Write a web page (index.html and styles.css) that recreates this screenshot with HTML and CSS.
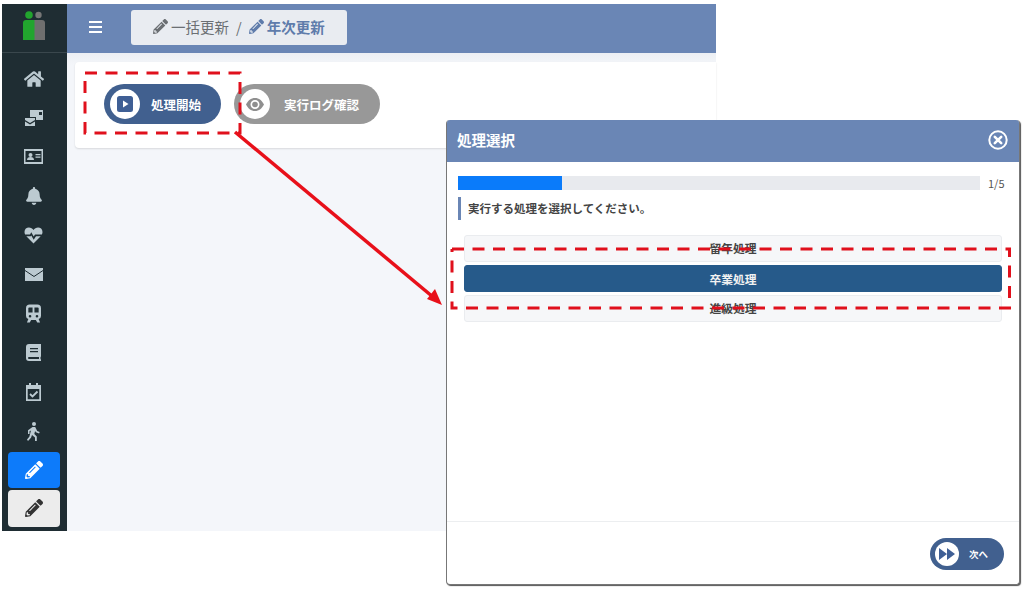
FILE: index.html
```html
<!DOCTYPE html>
<html lang="ja">
<head>
<meta charset="utf-8">
<title>年次更新</title>
<link rel="stylesheet" href="styles.css">
</head>
<body>
<svg class="defs" width="0" height="0"><symbol id="pen" viewBox="0 0 512 512"><path d="M497.9 142.1l-46.1 46.1c-4.7 4.7-12.3 4.7-17 0l-111-111c-4.7-4.7-4.7-12.3 0-17l46.1-46.1c18.7-18.7 49.1-18.7 67.900 0l60.1 60.1c18.8 18.7 18.8 49.1 0 67.900zM284.2 99.8L21.6 362.4.4 483.900c-2.900 16.4 11.400 30.6 27.800 27.800l121.500-21.300 262.600-262.600c4.700-4.700 4.700-12.300 0-17l-111-111c-4.800-4.700-12.400-4.700-17.100 0zM124.100 339.900c-5.500-5.500-5.500-14.300 0-19.800l154-154c5.500-5.500 14.300-5.500 19.800 0s5.500 14.300 0 19.800l-154 154c-5.500 5.500-14.300 5.500-19.800 0zM88 424h48v36.300l-64.500 11.300-31.100-31.100L51.700 376H88v48z"/></symbol></svg>
<div class="canvas">
  <div class="app">
    <nav class="sidebar">
      <div class="logo">
        <svg width="24" height="30" viewBox="0 0 24 30"><circle cx="7" cy="4" r="3.800" fill="#22a52e"/><circle cx="16.500" cy="4" r="3.200" fill="#777"/><path d="M12 9h8q3 0 3 3v17H12z" fill="#6f6f6f"/><path d="M1 12q0-3 3-3h8.500v20H1z" fill="#22a52e"/></svg>
      </div>
      <div class="side-icons">
        <span class="side-icon"><svg width="20" height="18" viewBox="0 0 576 512"><path d="M280.37 148.26L96 300.11V464a16 16 0 0 0 16 16l112.06-.29a16 16 0 0 0 15.92-16V368a16 16 0 0 1 16-16h64a16 16 0 0 1 16 16v95.64a16 16 0 0 0 16 16.05L464 480a16 16 0 0 0 16-16V300L295.67 148.26a12.19 12.19 0 0 0-15.3 0zM571.6 251.47L488 182.56V44.05a12 12 0 0 0-12-12h-56a12 12 0 0 0-12 12v72.61L318.47 43a48 48 0 0 0-61 0L4.34 251.47a12 12 0 0 0-1.6 16.9l25.5 31A12 12 0 0 0 45.15 301l235.22-193.74a12.19 12.19 0 0 1 15.3 0L530.9 301a12 12 0 0 0 16.9-1.6l25.5-31a12 12 0 0 0-1.7-16.93z" class="ic"/></svg></span>
        <span class="side-icon"><svg width="20" height="18" viewBox="0 0 20 18"><path d="M6 1h13v10h-7V8H6z" class="ic"/><rect x="15" y="3" width="3" height="3" fill="#1f2d33"/><path d="M1 9h10v2L6 14 1 11zM1 12.500l5 3 5-3V17H1z" class="ic"/></svg></span>
        <span class="side-icon"><svg width="19" height="15" viewBox="0 0 19 15"><path fill-rule="evenodd" d="M0 0h19v15H0zM1.500 2v11h16V2z" class="ic"/><circle cx="6.500" cy="6" r="2" class="ic"/><path d="M3 11q0-3 3.500-3t3.500 3zM11.500 5h5v1.300h-5zM11.500 7.500h5v1.300h-5z" class="ic"/></svg></span>
        <span class="side-icon"><svg width="16" height="18" viewBox="0 0 448 512"><path d="M224 512c35.32 0 63.97-28.65 63.97-64H160.03c0 35.35 28.65 64 63.97 64zm215.39-149.71c-19.32-20.76-55.47-51.99-55.47-154.29 0-77.7-54.48-139.9-127.94-155.16V32c0-17.67-14.32-32-31.98-32s-31.98 14.33-31.98 32v20.84C118.56 68.1 64.08 130.3 64.08 208c0 102.3-36.15 133.53-55.47 154.29-6 6.45-8.66 14.16-8.61 21.71.11 16.4 12.98 32 32.1 32h383.8c19.12 0 32-15.6 32.1-32 .05-7.55-2.61-15.27-8.61-21.71z" class="ic"/></svg></span>
        <span class="side-icon"><svg width="19" height="17" viewBox="0 0 19 17"><path d="M9.500 3C7.500-.500 .5-.500.500 5c0 1 .2 1.700.6 2.500H6l1.300-2.300 2.400 4.300L11 7.500h6.900c.4-.8.600-1.500.6-2.500 0-5.500-7-5.500-9-2zM2.300 9.200 9.500 16.500l7.200-7.300H12l-2.300 3.500L7.300 8.400 6.800 9.200z" class="ic"/></svg></span>
        <span class="side-icon"><svg width="18" height="13" viewBox="0 0 18 13"><rect width="18" height="13" class="ic"/><path d="M0 2.500 9 8.500 18 2.500" fill="none" stroke="#1f2d33" stroke-width="1"/></svg></span>
        <span class="side-icon"><svg width="15" height="19" viewBox="0 0 16 19"><path fill-rule="evenodd" d="M4 0h8a4 4 0 0 1 4 4v8a3.500 3.500 0 0 1-2.500 3.400L15 19h-3l-1.500-2.500h-5L4 19H1l1.500-3.600A3.500 3.500 0 0 1 0 12V4a4 4 0 0 1 4-4zM2.500 4v4.500h4.500V3H3.500a1 1 0 0 0-1 1zM9 3v5.500h4.500V4a1 1 0 0 0-1-1zM4.300 11a1.400 1.400 0 1 0 0 2.800 1.400 1.400 0 0 0 0-2.800zM11.700 11a1.400 1.400 0 1 0 0 2.800 1.400 1.400 0 0 0 0-2.800z" class="ic"/></svg></span>
        <span class="side-icon"><svg width="15" height="17" viewBox="0 0 15 17"><path fill-rule="evenodd" d="M3 0h12v12.500l-.5.500v2l.5.500V17H3a3 3 0 0 1-3-3V3a3 3 0 0 1 3-3zM4 4v1.300h8V4zM4 7v1.300h8V7zM2 14a1 1 0 0 0 1 1h10v-2H3a1 1 0 0 0-1 1z" class="ic"/></svg></span>
        <span class="side-icon"><svg width="15" height="18" viewBox="0 0 15 18"><path fill-rule="evenodd" d="M3 0h2v2h5V0h2v2h3v16H0V2h3zM1.700 6v10.300h11.600V6z" class="ic"/><path d="M4 11l2.500 2.500L11.500 8.500" fill="none" stroke="#bccad1" stroke-width="1.800"/></svg></span>
        <span class="side-icon"><svg width="13" height="19" viewBox="0 0 13 19"><circle cx="7" cy="2" r="2" class="ic"/><path d="M5.500 5h2.700l2 4 2.500 1-.6 1.500-3.200-1.300-.8-1.200-.8 3 2.500 2.500V19H8v-3.500L5 13l-1 2.800L1 19 0 17.500l2.300-2.800L4 8.500l-1.500.7V12H1V8.300z" class="ic"/></svg></span>
        <span class="side-icon side-active"><svg class="pen-white" width="18" height="18"><use href="#pen"/></svg></span>
        <span class="side-icon side-light"><svg class="pen-dark" width="18" height="18"><use href="#pen"/></svg></span>
      </div>
    </nav>
    <div class="content">
      <header class="topbar">
        <span class="menu-icon"><i></i><i></i><i></i></span>
        <div class="crumb">
          <svg class="pencil pen-grey" width="15" height="15"><use href="#pen"/></svg>
          <span class="crumb-text">一括更新</span>
          <span class="crumb-sep">/</span>
          <svg class="pencil pen-blue" width="15" height="15"><use href="#pen"/></svg>
          <span class="crumb-current">年次更新</span>
        </div>
      </header>
      <main class="main">
        <section class="card">
          <button class="pill pill-blue">
            <span class="pill-disc"><svg width="16" height="16" viewBox="0 0 16 16"><path fill-rule="evenodd" d="M2.500 0h11A2.500 2.500 0 0 1 16 2.500v11a2.500 2.500 0 0 1-2.500 2.500h-11A2.500 2.500 0 0 1 0 13.500v-11A2.500 2.500 0 0 1 2.500 0zM6 4.500v7L11.500 8z" fill="#3f5f95"/></svg></span>
            <span class="pill-label">処理開始</span>
          </button>
          <button class="pill pill-grey">
            <span class="pill-disc"><svg width="18" height="13" viewBox="0 0 18 13"><path fill-rule="evenodd" d="M9 0c4 0 7.200 2.700 9 6.500C16.200 10.300 13 13 9 13S1.800 10.300 0 6.500C1.800 2.700 5 0 9 0zM9 2a4.500 4.500 0 1 0 0 9 4.500 4.500 0 0 0 0-9z" fill="#8f8f8f"/><circle cx="9" cy="6.500" r="2.800" fill="#8f8f8f"/></svg></span>
            <span class="pill-label">実行ログ確認</span>
          </button>
        </section>
      </main>
    </div>
  </div>

  <section class="modal">
    <header class="modal-head">
      <h2 class="modal-title">処理選択</h2>
      <svg width="20" height="20" viewBox="0 0 20 20"><circle cx="10" cy="10" r="8.700" fill="none" stroke="#fff" stroke-width="2"/><path d="M6.800 6.800l6.400 6.400M13.200 6.800l-6.400 6.400" stroke="#fff" stroke-width="2.600" stroke-linecap="round"/></svg>
    </header>
    <div class="modal-body">
      <div class="progress-row">
        <div class="progress"><div class="progress-fill"></div></div>
        <span class="progress-num">1/5</span>
      </div>
      <p class="prompt">実行する処理を選択してください。</p>
      <div class="options">
        <div class="option">留年処理</div>
        <div class="option option-on">卒業処理</div>
        <div class="option">進級処理</div>
      </div>
    </div>
    <footer class="modal-foot">
      <button class="pill pill-blue pill-small">
        <span class="pill-disc"><svg width="16" height="12" viewBox="0 0 16 12"><path d="M0 0l8 6-8 6zM8 0l8 6-8 6z" fill="#3f5f95"/></svg></span>
        <span class="pill-label">次へ</span>
      </button>
    </footer>
  </section>

  <svg class="arrow" width="1024" height="590" viewBox="0 0 1024 590">
    <path class="dash" d="M85 73H240V133H85V73"/>
    <path class="dash" d="M452 249H1009.500V308H452V249"/>
    <path d="M235 132 433 297" stroke="#e8101a" stroke-width="3.500" fill="none"/>
    <path d="M442 305 427 299 435 289z" fill="#e8101a"/>
  </svg>
</div>
</body>
</html>
```
FILE: styles.css
```css
* { box-sizing: border-box; }
html, body { margin: 0; padding: 0; background: #fff; }
body { font-family: "Noto Sans CJK JP", "Noto Sans", sans-serif; color: #444; }
.defs { position: absolute; }
.canvas { position: relative; width: 1024px; height: 590px; overflow: hidden; background: #fff; }

.app { position: absolute; left: 2px; top: 4px; width: 714px; height: 527px; display: flex; }

.sidebar { width: 65px; background: #1f2d33; display: flex; flex-direction: column; flex: none; }
.logo { height: 49px; display: flex; align-items: center; justify-content: center; padding: 0 1px 5px 0; border-bottom: 1px solid #3a474d; }
.ic { fill: #bccad1; }
.pen-white { fill: #fff; }
.pen-dark { fill: #333; }
.pen-grey { fill: #6b6f73; }
.pen-blue { fill: #5f7cab; }
.side-icons { display: flex; flex-direction: column; align-items: center; padding: 6px 2px 0 0; }
.side-icon { width: 52px; height: 39.2px; display: flex; align-items: center; justify-content: center; }
.side-active { height: 36px; margin-top: 1px; background: #0d7bfa; border-radius: 4px; }
.side-light { height: 37px; margin-top: 2px; background: #ececec; border-radius: 4px; }

.content { flex: 1; display: flex; flex-direction: column; min-width: 0; }
.topbar { height: 49px; background: #6a86b5; display: flex; align-items: center; padding: 0 0 3px 22px; }
.menu-icon { width: 13px; display: flex; flex-direction: column; gap: 3px; margin-right: 29px; }
.menu-icon i { display: block; height: 2px; background: #fff; }
.crumb { width: 216px; height: 35px; background: #e9ecf1; border-radius: 3px; display: flex; align-items: center; padding: 0 0 2px 22px; font-size: 14.500px; }
.pencil { flex: none; margin-right: 3px; }
.crumb-text { color: #6b6f73; }
.crumb-sep { color: #6b6f73; margin: 0 7px; }
.crumb-current { color: #5f7cab; font-weight: 700; }

.main { flex: 1; background: linear-gradient(#eceff4 0, #f4f6fa 12px); padding: 9px 0 0 8px; }
.card { height: 86px; background: #fff; border-radius: 4px 0 0 4px; box-shadow: 0 1px 2px rgba(0,0,0,.12); display: flex; align-items: center; gap: 13px; padding: 0 0 2px 29px; }

.pill { border: 0; border-radius: 21px; height: 40px; display: flex; align-items: center; padding: 0 0 0 6px; color: #fff; font: 700 12.500px "Noto Sans CJK JP", sans-serif; }
.pill-blue { background: #41608f; width: 117px; }
.pill-grey { background: #989898; width: 146px; }
.pill-grey .pill-label { margin-left: 14px; }
.pill-disc { width: 30px; height: 30px; border-radius: 50%; background: #fff; display: flex; align-items: center; justify-content: center; flex: none; }
.pill-label { margin-left: 11px; }

.modal { position: absolute; left: 446px; top: 120px; width: 574px; height: 465px; background: #fff; border-radius: 4px; border: 1px solid #777; border-top: 0; box-shadow: 1px 1px 1px #555; display: flex; flex-direction: column; }
.modal-head { height: 42px; background: #6a86b5; display: flex; align-items: center; justify-content: space-between; padding: 0 11px 3px 10px; border-radius: 3px 3px 0 0; flex: none; }
.modal-title { margin: 0; color: #fff; font-size: 14.500px; font-weight: 700; }
.modal-body { flex: 1; padding: 14px 15px 0 11px; }
.progress-row { display: flex; align-items: center; height: 14px; }
.progress { width: 522px; height: 14px; background: #e8eaee; flex: none; }
.progress-fill { width: 104px; height: 14px; background: #0a7bfa; }
.progress-num { margin-left: 8px; font-size: 11px; color: #555; }
.prompt { margin: 7px 0 0; height: 23px; line-height: 22px; border-left: 3px solid #6a86b5; padding-left: 7px; font-size: 11.500px; font-weight: 700; color: #444; }
.options { margin: 15px 0 0 6px; width: 538px; display: flex; flex-direction: column; gap: 3px; }
.option { height: 27px; background: #f6f7f9; border: 1px solid #eaecef; border-radius: 3px; display: flex; align-items: center; justify-content: center; padding-bottom: 3px; font-size: 11.800px; font-weight: 700; color: #444; }
.option-on { background: #265a8a; border-color: #265a8a; color: #f2f2f2; padding-bottom: 1px; }
.modal-foot { height: 63px; border-top: 1px solid #eceef0; display: flex; align-items: center; justify-content: flex-end; padding: 1px 15px 0 0; flex: none; }
.pill-small { width: 74px; height: 32px; padding-left: 5px; font-size: 9.500px; }
.pill-small .pill-disc { width: 24px; height: 24px; }
.pill-small .pill-label { margin-left: 10px; }

.arrow { position: absolute; left: 0; top: 0; pointer-events: none; }
.dash { fill: none; stroke: #e0101c; stroke-width: 3; stroke-dasharray: 12 8.500; }
```
